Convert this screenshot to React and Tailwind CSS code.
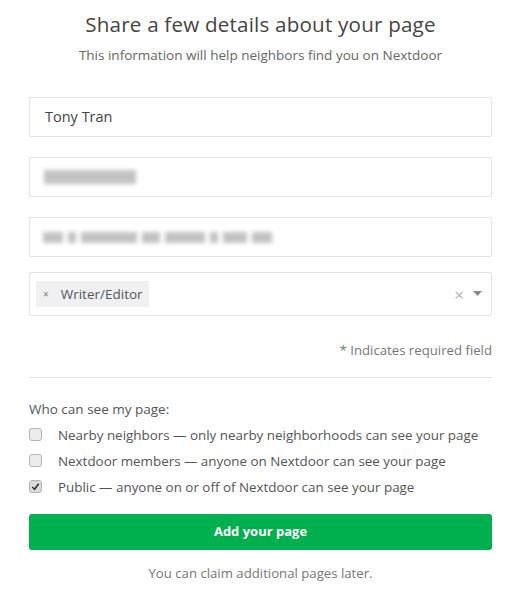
import { useState } from 'react';

const font = { fontFamily: '"Open Sans", "Noto Sans", sans-serif' };

function Blur({ parts, h = 'h-[11px]' }) {
  return (
    <div className="flex items-center gap-[5px] blur-[2px]">
      {parts.map((w, i) => (
        <div key={i} className={`${h} bg-[#c2c2c2]`} style={{ width: w }} />
      ))}
    </div>
  );
}

function Box({ checked, onClick }) {
  return (
    <button
      onClick={onClick}
      className={`w-[13px] h-[13px] rounded-[3px] border border-[#b4b4b4] flex items-center justify-center shrink-0 ${
        checked ? 'bg-[#dcdcdc]' : 'bg-[#ececec]'
      }`}
    >
      {checked && (
        <svg width="9" height="9" viewBox="0 0 10 10">
          <path d="M1.5 5.5 L4 8 L8.5 2" fill="none" stroke="#333" strokeWidth="1.8" />
        </svg>
      )}
    </button>
  );
}

export default function App() {
  const [vis, setVis] = useState([false, false, true]);
  const opts = [
    'Nearby neighbors \u2014 only nearby neighborhoods can see your page',
    'Nextdoor members \u2014 anyone on Nextdoor can see your page',
    'Public \u2014 anyone on or off of Nextdoor can see your page',
  ];

  return (
    <div className="w-[525px] h-[592px] bg-white pl-[29px] pr-[33px] text-[#555]" style={font}>
      <h1 className="pt-[9px] text-center text-[20.6px] leading-[30px] text-[#444] tracking-[0.2px]">
        Share a few details about your page
      </h1>
      <p className="mt-[7px] text-center text-[13.5px] leading-[18px] text-[#666]">
        This information will help neighbors find you on Nextdoor
      </p>

      <div className="mt-[33px] flex flex-col gap-[20px]">
        <div className="h-[40px] border border-[#e3e3e3] rounded-[2px] flex items-center px-[15px] text-[14.5px] text-[#444]">
          Tony Tran
        </div>
        <div className="h-[40px] border border-[#e3e3e3] rounded-[2px] flex items-center px-[14px]">
          <Blur parts={[92]} h="h-[14px]" />
        </div>
        <div className="h-[40px] border border-[#e3e3e3] rounded-[2px] flex items-center px-[13px]">
          <Blur parts={[20, 8, 56, 18, 40, 8, 24, 20]} />
        </div>
      </div>

      <div className="mt-[15px] h-[44px] border border-[#e3e3e3] rounded-[2px] flex items-center pl-[6px] pr-[9px]">
        <div className="h-[26px] bg-[#f0f0f3] flex items-center pl-[7px] pr-[6px] text-[13.5px] text-[#555]">
          <span className="text-[10px] text-[#777] mr-[12px]">{'\u00d7'}</span>
          Writer/Editor
        </div>
        <div className="flex-1" />
        <span className="text-[#b0b0b0] text-[17px] leading-none mr-[9px]">{'\u00d7'}</span>
        <svg width="9" height="6" viewBox="0 0 9 6">
          <path d="M0 0 H9 L4.5 5 Z" fill="#888" />
        </svg>
      </div>

      <p className="mt-[25px] text-right text-[13.2px] text-[#777]">* Indicates required field</p>

      <div className="mt-[16px] h-px bg-[#e3e3e3]" />

      <p className="mt-[24px] text-[13.5px] text-[#555] leading-[15px]">Who can see my page:</p>
      <div className="mt-[5px] flex flex-col">
        {opts.map((t, i) => (
          <div key={i} className="h-[26px] flex items-center gap-[16px] text-[13.4px] text-[#555]">
            <Box
              checked={vis[i]}
              onClick={() => setVis(vis.map((v, j) => (j === i ? !v : v)))}
            />
            <span>{t}</span>
          </div>
        ))}
      </div>

      <button className="mt-[14px] w-full h-[36px] rounded-[3px] bg-[#00b04f] text-white text-[13px] font-bold">
        Add your page
      </button>

      <p className="mt-[14px] text-center text-[13.2px] text-[#777]">You can claim additional pages later.</p>
    </div>
  );
}
